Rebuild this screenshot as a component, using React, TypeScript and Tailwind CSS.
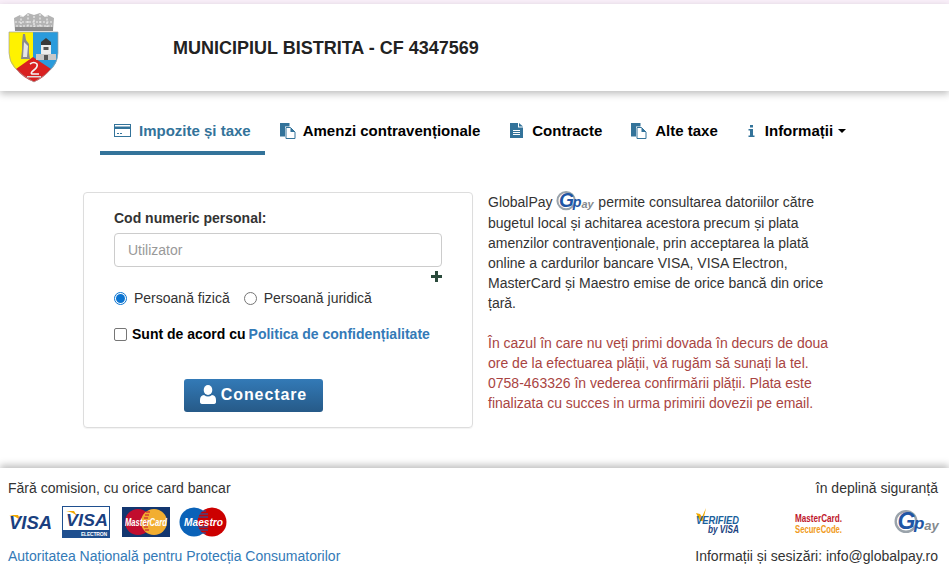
import React from "react";

const Crest = () => (
  <svg width="52" height="70" viewBox="0 0 52 70" className="block">
    <path d="M6 5 L12 2 L15 4 L20 0 L26 2 L32 0 L37 4 L40 2 L46 5 L45 18 H7 Z" fill="#b4b4b4" />
    <path d="M7 9 H45 M8 13 H44 M13 2 V17 M20 1 V17 M26 3 V17 M32 1 V17 M39 2 V17" stroke="#efefef" strokeWidth="1.2" strokeDasharray="2 1.5" fill="none" />
    <path d="M7 14 H45 V18 H7 Z" fill="#8c8c8c" />
    <path d="M1 19 H25 V46 L9 57 Q1 51 1 40 Z" fill="#fff200" />
    <path d="M25 19 H50 V40 Q50 51 42 57 L25 46 Z" fill="#2a9bdc" />
    <path d="M25 44 L43 56 Q36 65 26 69 Q15 65 8 56 Z" fill="#d92020" />
    <path d="M1 19 H50 V40 Q50 56 26 69 Q1 56 1 40 Z" fill="none" stroke="#a0a0a0" strokeWidth="0.7" />
    <path d="M14 30 L15 21 L17 21 L18 27 L21 31 L21 40 L22 46 L13 46 L14 37 Z" fill="#8a8a8a" />
    <path d="M16 29 L20 33 L19 44 L15 44 Z" fill="#e6e6e6" />
    <path d="M33 29 L38 25 L43 29 V32 H33 Z" fill="#3a3a3a" />
    <path d="M33 32 H43 V44 H33 Z" fill="#ededed" />
    <path d="M28 41 H48 V47 H28 Z" fill="#c8c8c8" />
    <path d="M35.5 34 H40.5 V37 H35.5 Z M36 42 H40 V47 H36 Z" fill="#555" />
    <path d="M22 51 Q26 48 29 51 Q30 54 26 57 Q22 60 24 61 L31 61" fill="none" stroke="#f5f5f5" strokeWidth="1.6" />
    <path d="M19 63 H33 V64.5 H19 Z" fill="#ddd" />
  </svg>
);

const CardIcon = () => (
  <svg width="17" height="13" viewBox="0 0 17 13" fill="none" className="block">
    <rect x="0.5" y="0.5" width="16" height="12" fill="#fff" stroke="#33739a" />
    <rect x="1" y="2.5" width="15" height="2.5" fill="#33739a" />
    <path d="M3 9.5H5M6 9.5H8" stroke="#33739a" />
  </svg>
);

const CopyIcon = () => (
  <svg width="16" height="16" viewBox="0 0 16 16" className="block">
    <path d="M0 0 H9.5 V3.5 H5 V13.5 H0 Z" fill="#33739a" />
    <path d="M6 4.5 H10.5 L15 9 V15.5 H6 Z" fill="#fff" stroke="#33739a" />
    <path d="M10.5 4.5 V9 H15 Z" fill="#33739a" />
  </svg>
);

const FileIcon = () => (
  <svg width="13" height="15" viewBox="0 0 13 15" className="block">
    <path d="M0 0 H8 V4.5 H13 V15 H0 Z" fill="#33739a" />
    <path d="M9 0 L13 3.5 H9 Z" fill="#33739a" />
    <path d="M3 7.5 H10 M3 9.5 H10 M3 11.5 H10" stroke="#fff" />
  </svg>
);

const InfoIcon = () => (
  <svg width="7" height="12" viewBox="0 0 7 12" className="block">
    <path d="M2 0 H5 V2.5 H2 Z M0.5 4 H5 V10.5 H6.5 V12 H0.5 V10.5 H2 V5.5 H0.5 Z" fill="#33739a" />
  </svg>
);

const UserIcon = () => (
  <svg width="16" height="19" viewBox="0 0 16 19" fill="#fff" className="block">
    <ellipse cx="8" cy="5" rx="4.3" ry="5" />
    <path d="M0 15 Q0 10.5 4 10 Q8 13 12 10 Q16 10.5 16 15 V17 Q16 19 13 19 H3 Q0 19 0 17 Z" />
  </svg>
);

const GpayLogo = ({ w = 44, h = 25 }: { w?: number; h?: number }) => (
  <svg width={w} height={h} viewBox="0 0 44 25" className="block overflow-visible">
    <circle cx="12" cy="11.5" r="10.3" fill="none" stroke="#9aa3ab" strokeWidth="2.4" />
    <text x="3.5" y="19" fontFamily="'Liberation Sans'" fontStyle="italic" fontWeight="700" fontSize="23" fill="#1f56a5">
      G
      <tspan dx="-1.5" fontSize="17">p</tspan>
      <tspan dx="0" dy="1" fontSize="13" fill="#84898e">ay</tspan>
    </text>
  </svg>
);

const VisaLogo = () => (
  <svg width="44" height="18" viewBox="0 0 44 18" className="block overflow-visible">
    <path d="M0 2 H9 L12 8 Q7 3 0 2 Z" fill="#f2a900" />
    <text x="0" y="16" fontFamily="'Liberation Sans'" fontStyle="italic" fontWeight="700" fontSize="17.5" fill="#1a3f80" textLength="43" lengthAdjust="spacingAndGlyphs">VISA</text>
  </svg>
);

const VisaElectron = () => (
  <svg width="48" height="32" viewBox="0 0 48 32" className="block overflow-visible">
    <rect x="0.5" y="0.5" width="47" height="31" fill="#fff" stroke="#1f4f8f" />
    <rect x="1" y="24" width="46" height="7" fill="#1f4f8f" />
    <path d="M4 5 H12 L15 10 Q11 6 4 5 Z" fill="#f2a900" />
    <text x="4" y="20" fontFamily="'Liberation Sans'" fontStyle="italic" fontWeight="700" fontSize="17" fill="#1a3f80" textLength="42" lengthAdjust="spacingAndGlyphs">VISA</text>
    <text x="19" y="30" fontFamily="'Liberation Sans'" fontWeight="700" fontSize="5" fill="#fff" textLength="26">ELECTRON</text>
  </svg>
);

const McLogo = () => (
  <svg width="48" height="30" viewBox="0 0 48 30" className="block overflow-visible">
    <rect width="48" height="30" fill="#13366f" />
    <circle cx="16" cy="15" r="13" fill="#c10d2e" />
    <circle cx="32" cy="15" r="13" fill="#f2ae30" />
    <path d="M24 5 H28 M23 8 H27 M22 11 H26 M22 14 H26 M22 17 H26 M22 20 H26 M23 23 H27" stroke="#c10d2e" strokeWidth="1" />
    <text x="3" y="19" fontFamily="'Liberation Sans'" fontStyle="italic" fontWeight="700" fontSize="10.5" fill="#fff" textLength="42" lengthAdjust="spacingAndGlyphs">MasterCard</text>
  </svg>
);

const MaestroLogo = () => (
  <svg width="48" height="30" viewBox="0 0 48 30" className="block overflow-visible">
    <circle cx="15" cy="15" r="14.5" fill="#0a62b8" />
    <circle cx="33" cy="15" r="14.5" fill="#cc0000" />
    <path d="M21 4 H27 M19 7 H29 M19 10 H29 M19 20 H29 M19 23 H29 M21 26 H27" stroke="#0a62b8" strokeWidth="1" />
    <text x="5" y="19" fontFamily="'Liberation Sans'" fontStyle="italic" fontWeight="700" fontSize="10.5" fill="#fff" textLength="39" lengthAdjust="spacingAndGlyphs">Maestro</text>
  </svg>
);

const VerifiedVisa = () => (
  <svg width="46" height="26" viewBox="0 0 46 26" className="block overflow-visible">
    <path d="M1 5 L5 6 L7 9 L11 0 L8 13 L5 13 Z" fill="#f2a900" />
    <text x="1" y="16" fontFamily="'Liberation Sans'" fontStyle="italic" fontWeight="700" fontSize="10.5" fill="#1a5f9c" textLength="43" lengthAdjust="spacingAndGlyphs">VERIFIED</text>
    <text x="13" y="25" fontFamily="'Liberation Sans'" fontStyle="italic" fontWeight="700" fontSize="10" fill="#1a3f80" textLength="31" lengthAdjust="spacingAndGlyphs">by VISA</text>
  </svg>
);

const McSecure = () => (
  <svg width="48" height="20" viewBox="0 0 48 20" className="block overflow-visible">
    <text x="0" y="9" fontFamily="'Liberation Sans'" fontWeight="700" fontSize="10.5" fill="#c0182c" textLength="47" lengthAdjust="spacingAndGlyphs">MasterCard.</text>
    <text x="0" y="19.5" fontFamily="'Liberation Sans'" fontWeight="700" fontSize="10.5" fill="#f09a20" textLength="47" lengthAdjust="spacingAndGlyphs">SecureCode.</text>
  </svg>
);

export default function App() {
  const tab = "flex h-[54px] items-center border-b-4 px-[15px] pt-[9px] text-[15px] font-bold";
  return (
    <div className="h-[585px] w-[949px] overflow-hidden bg-white font-['Liberation_Sans',Arial,sans-serif] text-[14px] leading-[20px] text-[#333]">
      <div className="h-[4px] bg-[#f9eff9]" />
      <header className="flex h-[87px] items-start bg-white pl-[8px] pt-[9px] shadow-[0_3px_7px_rgba(0,0,0,0.25)]">
        <Crest />
        <h1 className="ml-[113px] mt-[25px] text-[18px] leading-[20px] font-bold text-[#222]">MUNICIPIUL BISTRITA - CF 4347569</h1>
      </header>

      <nav className="mt-[10px] flex items-start pl-[100px]">
        <a className={`${tab} gap-[8px] border-[#33739a] pl-[14px] pr-[14px] text-[#33739a]`}><CardIcon />Impozite și taxe</a>
        <a className={`${tab} gap-[7px] border-transparent text-black`}><CopyIcon />Amenzi contravenționale</a>
        <a className={`${tab} gap-[9px] border-transparent pr-[14px] text-black`}><FileIcon />Contracte</a>
        <a className={`${tab} gap-[8px] border-transparent pr-[14px] text-black`}><CopyIcon />Alte taxe</a>
        <a className={`${tab} gap-[10px] border-transparent pl-[16px] text-black`}>
          <InfoIcon />
          <span className="flex items-center gap-[5px]">
            Informații
            <span className="mt-[1px] h-0 w-0 border-x-[4px] border-t-[4px] border-x-transparent border-t-black" />
          </span>
        </a>
      </nav>

      <main className="mt-[37px] flex items-start pl-[83px]">
        <form className="h-[236px] w-[390px] rounded-[4px] border border-[#ddd] pl-[30px] pt-[15px] shadow-[0_1px_1px_rgba(0,0,0,0.05)]">
          <label className="block text-[14px] leading-[20px] font-bold text-[#333]">Cod numeric personal:</label>
          <div className="mt-[5px] flex h-[34px] w-[328px] items-center rounded-[4px] border border-[#ccc] pl-[13px] text-[14px] text-[#999]">Utilizator</div>
          <div className="flex w-[328px] justify-end pt-[4px]">
            <svg width="11" height="11" viewBox="0 0 11 11"><path d="M4 0H7V4H11V7H7V11H4V7H0V4H4Z" fill="#2b4a3c" /></svg>
          </div>
          <div className="mt-[6px] flex items-center text-[14px] text-[#333]">
            <span className="flex h-[13px] w-[13px] items-center justify-center rounded-full border border-[#0b74d1]">
              <span className="h-[9px] w-[9px] rounded-full bg-[#0b74d1]" />
            </span>
            <span className="ml-[7px]">Persoană fizică</span>
            <span className="ml-[14px] h-[13px] w-[13px] rounded-full border border-[#767676]" />
            <span className="ml-[7px]">Persoană juridică</span>
          </div>
          <div className="mt-[16px] flex items-center text-[14px] font-bold">
            <span className="h-[13px] w-[13px] rounded-[2px] border border-[#767676]" />
            <span className="ml-[5px] text-black">Sunt de acord cu</span>
            <a className="ml-[3px] text-[#337ab7]">Politica de confidențialitate</a>
          </div>
          <button type="button" className="mt-[35px] ml-[70px] flex h-[33px] w-[139px] items-center justify-center gap-[5px] rounded-[3px] bg-gradient-to-b from-[#337ab7] to-[#265a88] pb-[2px] text-[16px] font-bold tracking-[0.9px] text-white">
            <UserIcon />
            Conectare
          </button>
        </form>

        <div className="ml-[15px] w-[345px] text-[14px] leading-[20px]">
          <p className="text-[#333]">GlobalPay <span className="relative inline-block h-[21px] w-[38px] align-[-6px]"><span className="absolute left-0 top-[-2px]"><GpayLogo w={37} h={23} /></span></span> permite consultarea datoriilor către bugetul local și achitarea acestora precum și plata amenzilor contravenționale, prin acceptarea la plată online a cardurilor bancare VISA, VISA Electron, MasterCard și Maestro emise de orice bancă din orice țară.</p>
          <p className="mt-[20px] text-[#a94442]">În cazul în care nu veți primi dovada în decurs de doua ore de la efectuarea plății, vă rugăm să sunați la tel. 0758-463326 în vederea confirmării plății. Plata este finalizata cu succes in urma primirii dovezii pe email.</p>
        </div>
      </main>

      <footer className="mt-[40px] flex h-[117px] justify-between pl-[8px] pr-[11px] pt-[10px] shadow-[0_-3px_7px_rgba(0,0,0,0.25)]">
        <div>
          <div>Fără comision, cu orice card bancar</div>
          <div className="mt-[8px] flex items-center">
            <span className="ml-[1px]"><VisaLogo /></span>
            <span className="ml-[9px]"><VisaElectron /></span>
            <span className="ml-[12px]"><McLogo /></span>
            <span className="ml-[9px]"><MaestroLogo /></span>
          </div>
          <a className="mt-[8px] block text-[#337ab7]">Autoritatea Națională pentru Protecția Consumatorilor</a>
        </div>
        <div className="text-right">
          <div>în deplină siguranță</div>
          <div className="mt-[9px] flex h-[28px] items-center justify-end">
            <VerifiedVisa />
            <span className="ml-[54px] mt-[4px]"><McSecure /></span>
            <span className="ml-[51px] mt-[2px]"><GpayLogo w={44} h={25} /></span>
          </div>
          <div className="mt-[11px]">Informații și sesizări: info@globalpay.ro</div>
        </div>
      </footer>
    </div>
  );
}
